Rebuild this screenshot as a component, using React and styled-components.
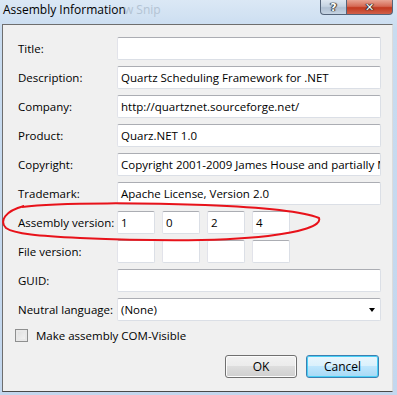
import styled, { createGlobalStyle } from "styled-components"

const GlobalStyle = createGlobalStyle`
    body {
        margin: 0;
        background: #c4d9ef;
        font-family: "Open Sans", "Noto Sans", sans-serif;
    }
`;

const Window = styled.div`
    position: relative;
    width: 397px;
    height: 395px;
    background: linear-gradient(180deg, #dbe8f5 0%, #c9dcf0 30px, #c3d7ee 100%);
    display: flex;
    flex-direction: column;
    overflow: hidden;
`;

const TitleBar = styled.div`
    height: 24px;
    display: flex;
    align-items: flex-start;
    padding-left: 3px;
`;

const Caption = styled.div`
    font-size: 12px;
    line-height: 20px;
    color: #000;
    white-space: nowrap;
`;

const Ghost = styled.span`
    color: #b3c3d3;
    margin-left: -2px;
`;

const CaptionButtons = styled.div`
    margin-left: auto;
    margin-right: 4px;
    display: flex;
`;

const CapButton = styled.div`
    width: ${p => p.$w}px;
    height: 15px;
    box-sizing: border-box;
    border: 1px solid #54647a;
    border-top: none;
    border-radius: ${p => p.$close ? "0 0 4px 0" : "0 0 0 4px"};
    border-left: ${p => p.$close ? "none" : "1px solid #54647a"};
    background: ${p => p.$close
        ? "linear-gradient(180deg, #e8a493 0%, #d56a55 45%, #c2391f 55%, #d0604a 100%)"
        : "linear-gradient(180deg, #dde6f0 0%, #c5d3e2 45%, #b0c0d3 55%, #c6d4e3 100%)"};
    display: flex;
    align-items: center;
    justify-content: center;
    color: #fff;
    font-family: "DejaVu Sans", sans-serif;
    font-weight: bold;
    font-size: 11px;
    text-shadow: 0 0 1px #2a2a2a, 0 0 1px #2a2a2a, 1px 0 1px #333, -1px 0 1px #333;
`;

const Client = styled.div`
    margin: 0 4px 0 2px;
    height: 368px;
    box-sizing: border-box;
    background: #f0f0f0;
    border: 1px solid #6e6e6e;
    border-right-color: #dcdcdc;
    border-bottom: 1px solid #4a4a4a;
    padding: 12px 12px 0 15px;
    display: flex;
    flex-direction: column;
    font-size: 11.5px;
`;

const Form = styled.div`
    display: grid;
    grid-template-columns: 99px 264px;
    row-gap: 6px;
    align-items: center;
`;

const Label = styled.div`
    color: #000;
    white-space: nowrap;
`;

const TextBox = styled.div`
    height: 23px;
    width: ${p => p.$w ? `${p.$w}px` : "100%"};
    box-sizing: border-box;
    background: #fff;
    border: 1px solid #dbdfe6;
    border-top-color: #abadb3;
    border-left-color: #e2e3ea;
    border-radius: 2px;
    padding: 0 3px;
    line-height: 21px;
    color: #000;
    white-space: nowrap;
    overflow: hidden;
`;

const VersionRow = styled.div`
    display: flex;
    gap: 7px;
`;

const Combo = styled(TextBox)`
    display: flex;
    align-items: center;
    justify-content: space-between;
    padding-right: 5px;
`;

const Arrow = styled.div`
    width: 0;
    height: 0;
    border-left: 3.5px solid transparent;
    border-right: 3.5px solid transparent;
    border-top: 4px solid #000;
`;

const CheckRow = styled.label`
    display: flex;
    align-items: center;
    gap: 8px;
    margin: 7px 0 0 -3px;
`;

const CheckBox = styled.span`
    width: 13px;
    height: 13px;
    box-sizing: border-box;
    border: 1px solid #8e8f8f;
    background: linear-gradient(135deg, #dcdcdc, #f6f6f6);
    box-shadow: inset 0 0 0 2px #e8e8e8;
`;

const ButtonRow = styled.div`
    margin-top: auto;
    margin-bottom: 13px;
    display: flex;
    justify-content: flex-end;
    gap: 9px;
    padding-right: 1px;
`;

const Button = styled.div`
    width: ${p => p.$w}px;
    height: 23px;
    box-sizing: border-box;
    border: 1px solid ${p => p.$focus ? "#3c7fb1" : "#707070"};
    border-radius: 3px;
    background: ${p => p.$focus
        ? "linear-gradient(180deg, #eaf6fd 0%, #d9f0fc 50%, #bee6fd 50%, #a7d9f5 100%)"
        : "linear-gradient(180deg, #f2f2f2 0%, #ebebeb 50%, #dddddd 50%, #cfcfcf 100%)"};
    box-shadow: inset 0 0 0 1px ${p => p.$focus ? "#48d0f6" : "#fcfcfc"};
    display: flex;
    align-items: center;
    justify-content: center;
    font-size: 12px;
    color: #000;
`;

const Scribble = styled.svg`
    position: absolute;
    left: 0;
    top: 0;
    pointer-events: none;
`;

const fields = [
    ["Title:", ""],
    ["Description:", "Quartz Scheduling Framework for .NET"],
    ["Company:", "http://quartznet.sourceforge.net/"],
    ["Product:", "Quarz.NET 1.0"],
    ["Copyright:", "Copyright 2001-2009 James House and partially M"],
    ["Trademark:", "Apache License, Version 2.0"],
]

const App = () => {
    return (
        <Window>
            <GlobalStyle />
            <TitleBar>
                <Caption>Assembly Information<Ghost>w Snip</Ghost></Caption>
                <CaptionButtons>
                    <CapButton $w={27}>?</CapButton>
                    <CapButton $w={46} $close>✕</CapButton>
                </CaptionButtons>
            </TitleBar>
            <Client>
                <Form>
                    {fields.map(([label, value]) => (
                        <>
                            <Label key={label}>{label}</Label>
                            <TextBox>{value}</TextBox>
                        </>
                    ))}
                    <Label>Assembly version:</Label>
                    <VersionRow>
                        {["1", "0", "2", "4"].map((v, i) => <TextBox key={i} $w={38}>{v}</TextBox>)}
                    </VersionRow>
                    <Label>File version:</Label>
                    <VersionRow>
                        {[0, 1, 2, 3].map(i => <TextBox key={i} $w={38} />)}
                    </VersionRow>
                    <Label>GUID:</Label>
                    <TextBox />
                    <Label>Neutral language:</Label>
                    <Combo>(None)<Arrow /></Combo>
                </Form>
                <CheckRow>
                    <CheckBox />
                    Make assembly COM-Visible
                </CheckRow>
                <ButtonRow>
                    <Button $w={72}>OK</Button>
                    <Button $w={73} $focus>Cancel</Button>
                </ButtonRow>
            </Client>
            <Scribble width="397" height="395">
                <path
                    d="M 22 207 C 60 202, 150 203, 205 205 C 255 207, 300 210, 319 218 C 322 226, 300 232, 268 236 C 225 241, 150 241, 80 238 C 40 236, 14 234, 6 228 C -1 221, 5 211, 24 206"
                    fill="none"
                    stroke="#e8121a"
                    strokeWidth="2"
                />
            </Scribble>
        </Window>
    )
}

export default App;
